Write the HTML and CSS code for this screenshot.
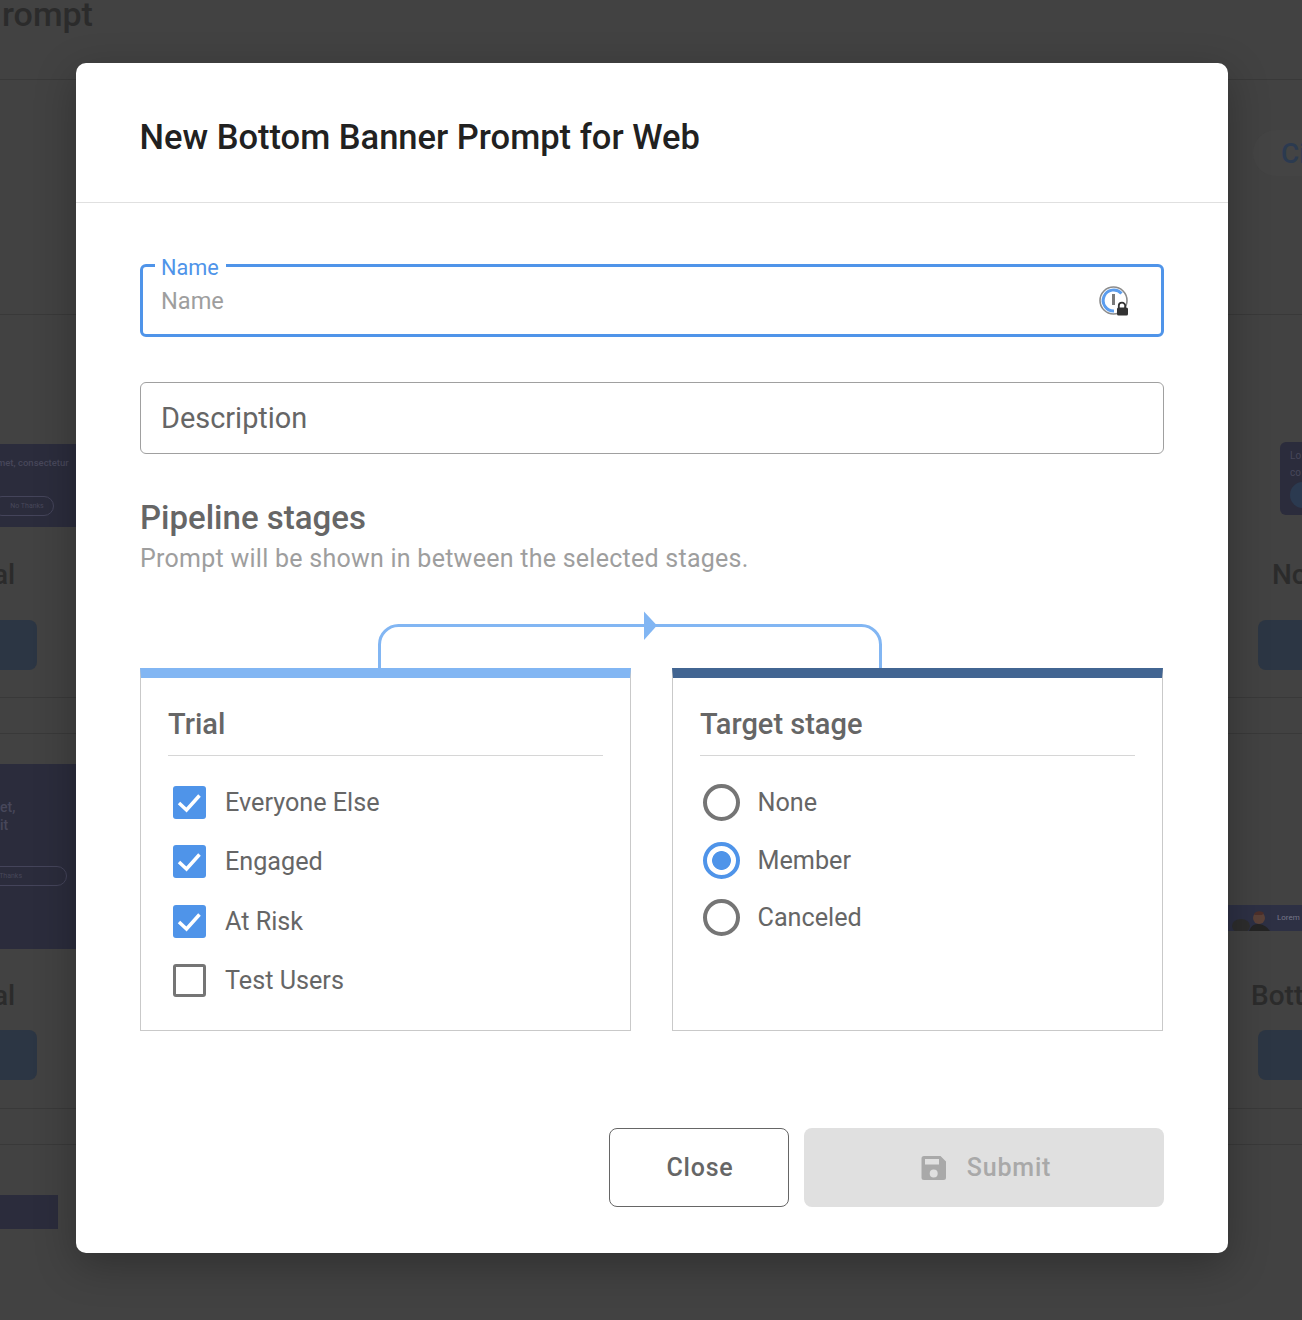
FILE: index.html
```html
<!DOCTYPE html>
<html lang="en">
<head>
<meta charset="utf-8">
<title>New Bottom Banner Prompt for Web</title>
<link rel="stylesheet" href="styles.css">
</head>
<body>
<div class="backdrop" aria-hidden="true">
  <div class="bg-title">rompt</div>
  <div class="bg-line l1"></div><div class="bg-line l2"></div><div class="bg-line l3"></div><div class="bg-line l4"></div><div class="bg-line l5"></div><div class="bg-line l6"></div>
  <div class="bg-card c1"><span class="t1">met, consectetur</span><span class="pill p1">No Thanks</span></div>
  <div class="bg-name n1">al</div>
  <div class="bg-btn b1"></div>
  <div class="bg-card c2"><span class="t2">et,<br>it</span><span class="pill p2">Thanks</span></div>
  <div class="bg-name n2">al</div>
  <div class="bg-btn b2"></div>
  <div class="bg-card c3"></div>
  <div class="bg-chip"></div>
  <div class="bg-link">Ci</div>
  <div class="bg-card c4"><span class="t4">Lo<br>co</span><span class="dot"></span></div>
  <div class="bg-name n3">No</div>
  <div class="bg-btn b3"></div>
  <div class="bg-card c5">
    <svg class="person" viewBox="0 0 46 26" width="46" height="26">
      <ellipse cx="10" cy="21" rx="9" ry="7" fill="#2d2d2d"/>
      <circle cx="28" cy="13" r="6" fill="#5a4138"/>
      <path d="M23 9a6 5 0 0 1 10-1l-2 2h-7Z" fill="#4d2f2a"/>
      <path d="M18 26q3-8 10-7t11 7Z" fill="#242424"/>
    </svg>
    <span class="t5">Lorem</span>
  </div>
  <div class="bg-name n4">Bott</div>
  <div class="bg-btn b4"></div>
</div>

<div class="overlay">
  <div class="modal">
    <header class="modal-head"><h1>New Bottom Banner Prompt for Web</h1></header>
    <div class="modal-body">
      <div class="field focused">
        <span class="float-label">Name</span>
        <span class="placeholder">Name</span>
        <svg class="pw-icon" viewBox="0 0 30 30" width="30" height="30">
          <circle cx="14.5" cy="14.500" r="13.500" fill="none" stroke="#8b8b8b" stroke-width="1.600"/>
          <path d="M22.500 7.500A10.500 10.500 0 1 0 15 25" fill="none" stroke="#5b9dee" stroke-width="3"/>
          <rect x="13" y="8" width="3" height="11" fill="#7a7a7a"/>
          <path d="M19.800 22v-2.200a3.200 3.200 0 0 1 6.400 0V22" fill="none" stroke="#333" stroke-width="1.800"/>
          <rect x="18" y="21.500" width="11" height="8" rx="1.500" fill="#333"/>
        </svg>
      </div>
      <div class="field desc"><span class="desc-text">Description</span></div>

      <h2 class="section-title">Pipeline stages</h2>
      <p class="section-sub">Prompt will be shown in between the selected stages.</p>

      <svg class="connector" viewBox="0 0 1024 56" width="1024" height="56">
        <path d="M239.500 56V32.500a19 19 0 0 1 19-19H721.500a19 19 0 0 1 19 19V56" fill="none" stroke="#82b6f3" stroke-width="3"/>
        <path d="M504 -.5L517 13.500L504 28Z" fill="#82b6f3"/>
      </svg>

      <div class="stages">
        <section class="stage trial">
          <h3>Trial</h3>
          <ul class="opts checks">
            <li><span class="box on"><svg viewBox="0 0 33 33" width="33" height="33"><path d="M6 17l7.500 7L26.500 9.500" fill="none" stroke="#fff" stroke-width="3.500"/></svg></span>Everyone Else</li>
            <li><span class="box on"><svg viewBox="0 0 33 33" width="33" height="33"><path d="M6 17l7.500 7L26.500 9.500" fill="none" stroke="#fff" stroke-width="3.500"/></svg></span>Engaged</li>
            <li><span class="box on"><svg viewBox="0 0 33 33" width="33" height="33"><path d="M6 17l7.500 7L26.500 9.500" fill="none" stroke="#fff" stroke-width="3.500"/></svg></span>At Risk</li>
            <li><span class="box"></span>Test Users</li>
          </ul>
        </section>
        <section class="stage target">
          <h3>Target stage</h3>
          <ul class="opts radios">
            <li><span class="radio"></span>None</li>
            <li><span class="radio on"></span>Member</li>
            <li><span class="radio"></span>Canceled</li>
          </ul>
        </section>
      </div>

      <div class="actions">
        <button class="btn close" type="button">Close</button>
        <button class="btn submit" type="button" disabled>
          <svg viewBox="0 0 26 26" width="26" height="26"><path d="M3 1H19.500L25 6.500V22.500A2.500 2.500 0 0 1 22.500 25H3A2.500 2.500 0 0 1 .5 22.500V3.500A2.500 2.500 0 0 1 3 1ZM4 4V9.500H18V4ZM12.700 14.500A4 4 0 1 0 12.700 22.500A4 4 0 1 0 12.700 14.500Z" fill="#a9a9a9" fill-rule="evenodd"/></svg>
          Submit
        </button>
      </div>
    </div>
  </div>
</div>
</body>
</html>
```

FILE: styles.css
```css
* { box-sizing: border-box; }
html, body { margin: 0; height: 100%; }
body {
  background: #424242;
  font-family: Roboto, "Liberation Sans", sans-serif;
  overflow: hidden;
  position: relative;
  width: 1302px;
  height: 1320px;
}

/* Dimmed page behind the dialog */
.backdrop { position: absolute; inset: 0; overflow: hidden; color: #2b2b2b; }
.bg-title { position: absolute; left: 2px; top: -6px; font-size: 34px; font-weight: 500; line-height: 40px; }
.bg-line { position: absolute; left: 0; right: 0; height: 1px; background: #393939; }
.l1 { top: 79px; } .l2 { top: 314px; } .l3 { top: 697px; }
.l4 { top: 733px; } .l5 { top: 1108px; } .l6 { top: 1144px; }
.bg-card { position: absolute; background: #2b2c3c; overflow: hidden; color: #47475a; font-size: 9.500px; }
.c1 { left: 0; top: 444px; width: 76px; height: 83px; }
.c2 { left: 0; top: 764px; width: 76px; height: 185px; }
.c3 { left: 0; top: 1195px; width: 58px; height: 34px; }
.c4 { left: 1280px; top: 442px; width: 60px; height: 73px; border-radius: 6px; }
.c5 { left: 1228px; top: 905px; width: 74px; height: 26px; background: #2d3044; }
.person { position: absolute; left: 3px; top: 0; }
.t1 { position: absolute; left: -3px; top: 13px; white-space: nowrap; font-weight: 500; }
.t2 { position: absolute; left: 0; top: 34px; font-size: 14px; line-height: 18px; font-weight: 500; }
.t4 { position: absolute; left: 10px; top: 5px; line-height: 17px; font-size: 10px; }
.t5 { position: absolute; left: 49px; top: 8px; line-height: 10px; font-size: 8px; color: #77778a; }
.dot { position: absolute; left: 10px; top: 40px; width: 26px; height: 26px; border-radius: 50%; background: #2b3a50; }
.pill { position: absolute; border: 1px solid #44445a; border-radius: 10px; height: 20px; line-height: 18px; font-size: 7px; white-space: nowrap; }
.p1 { left: -8px; top: 52px; width: 62px; text-align: center; padding-left: 8px; }
.p2 { left: -24px; top: 102px; width: 91px; text-align: right; padding-right: 44px; }
.bg-name { position: absolute; font-size: 28px; font-weight: 500; line-height: 34px; }
.n1 { left: -7px; top: 558px; }
.n2 { left: -7px; top: 979px; }
.n3 { left: 1272px; top: 558px; }
.n4 { left: 1251px; top: 979px; }
.bg-btn { position: absolute; width: 90px; height: 50px; border-radius: 8px; background: #2c3644; }
.b1 { left: -53px; top: 620px; } .b2 { left: -53px; top: 1030px; }
.b3 { left: 1258px; top: 620px; } .b4 { left: 1258px; top: 1030px; }
.bg-link { position: absolute; left: 1281px; top: 137px; font-size: 28px; line-height: 34px; font-weight: 500; color: #2b3a50; }
.bg-chip { position: absolute; left: 1253px; top: 130px; width: 80px; height: 46px; border-radius: 23px; background: #444; }

/* Dialog */
.overlay { position: absolute; inset: 0; padding: 63px 74px 67px 76px; }
.modal {
  width: 1152px;
  height: 1190px;
  background: #fff;
  border-radius: 10px;
  box-shadow: 0 12px 40px rgba(0, 0, 0, .28);
  display: flex;
  flex-direction: column;
}
.modal-head { height: 140px; border-bottom: 1px solid #e0e0e0; padding: 0 64px 0 63.500px; display: flex; align-items: center; }
.modal-head h1 { margin: 0; font-size: 34.500px; line-height: 40px; font-weight: 500; color: #212121; position: relative; top: 4px; }
.modal-body { padding: 61px 64px 0; display: flex; flex-direction: column; flex: 1; }

.field { position: relative; height: 73px; border-radius: 6px; display: flex; align-items: center; padding-left: 21px; }
.focused { border: 3px solid #4f94e9; padding-left: 18px; }
.float-label { position: absolute; left: 12px; top: -12px; padding: 0 7px 0 6px; background: #fff; color: #4f94e9; font-size: 21.700px; line-height: 26px; }
.placeholder { color: #9e9e9e; font-size: 23.600px; line-height: 28px; }
.pw-icon { position: absolute; right: 32.500px; top: 19px; }
.desc { margin-top: 45px; height: 72px; border: 1px solid #a0a0a0; padding-left: 20px; }
.desc-text { color: #666; font-size: 28.900px; line-height: 34px; }

.section-title { margin: 45px 0 0; font-size: 33px; line-height: 38px; font-weight: 500; color: #666; }
.section-sub { margin: 7px 0 0; font-size: 25px; line-height: 30px; color: #9e9e9e; letter-spacing: .26px; }
.connector { display: block; margin-top: 38px; overflow: visible; }

.stages { display: grid; grid-template-columns: 491px 491px; column-gap: 41px; height: 363px; }
.stage { border: 1px solid #c9c9c9; border-top: 10px solid; padding: 26px 27px 0; }
.trial { border-top-color: #82b6f3; }
.target { border-top-color: #426592; }
.stage h3 { margin: 0; height: 52px; border-bottom: 1px solid #d6d6d6; font-size: 29px; line-height: 40px; font-weight: 500; color: #666; }
.opts { list-style: none; margin: 0; padding: 0; color: #666; font-size: 25.200px; }
.opts li { display: flex; align-items: center; }
.checks { padding: 30px 0 0 5px; }
.checks li { height: 33px; margin-bottom: 26.500px; gap: 19px; position: relative; top: -.5px; }
.box { width: 33px; height: 33px; flex: none; border-radius: 3px; border: 3.500px solid #757575; }
.box.on { background: #4f94e9; border: 0; }
.box svg { display: block; }
.radios { padding: 28px 0 0 3px; }
.radios li { height: 37px; margin-bottom: 20.500px; gap: 17.500px; }
.radio { width: 37px; height: 37px; flex: none; border-radius: 50%; border: 4px solid #757575; }
.radio.on { border-color: #4f94e9; background: radial-gradient(circle, #4f94e9 0 9px, #fff 9.800px); }

.actions { display: flex; justify-content: flex-end; gap: 15px; margin-top: 97px; }
.btn { height: 79px; border-radius: 8px; font: 500 25px/30px Roboto, "Liberation Sans", sans-serif; letter-spacing: .8px; }
.close { width: 180px; background: #fff; border: 1px solid #666; color: #666; padding-left: 8px; }
.submit { width: 360px; background: #e0e0e0; border: 0; color: #a9a9a9; display: flex; align-items: center; justify-content: center; gap: 20px; padding-left: 10px; }
```
